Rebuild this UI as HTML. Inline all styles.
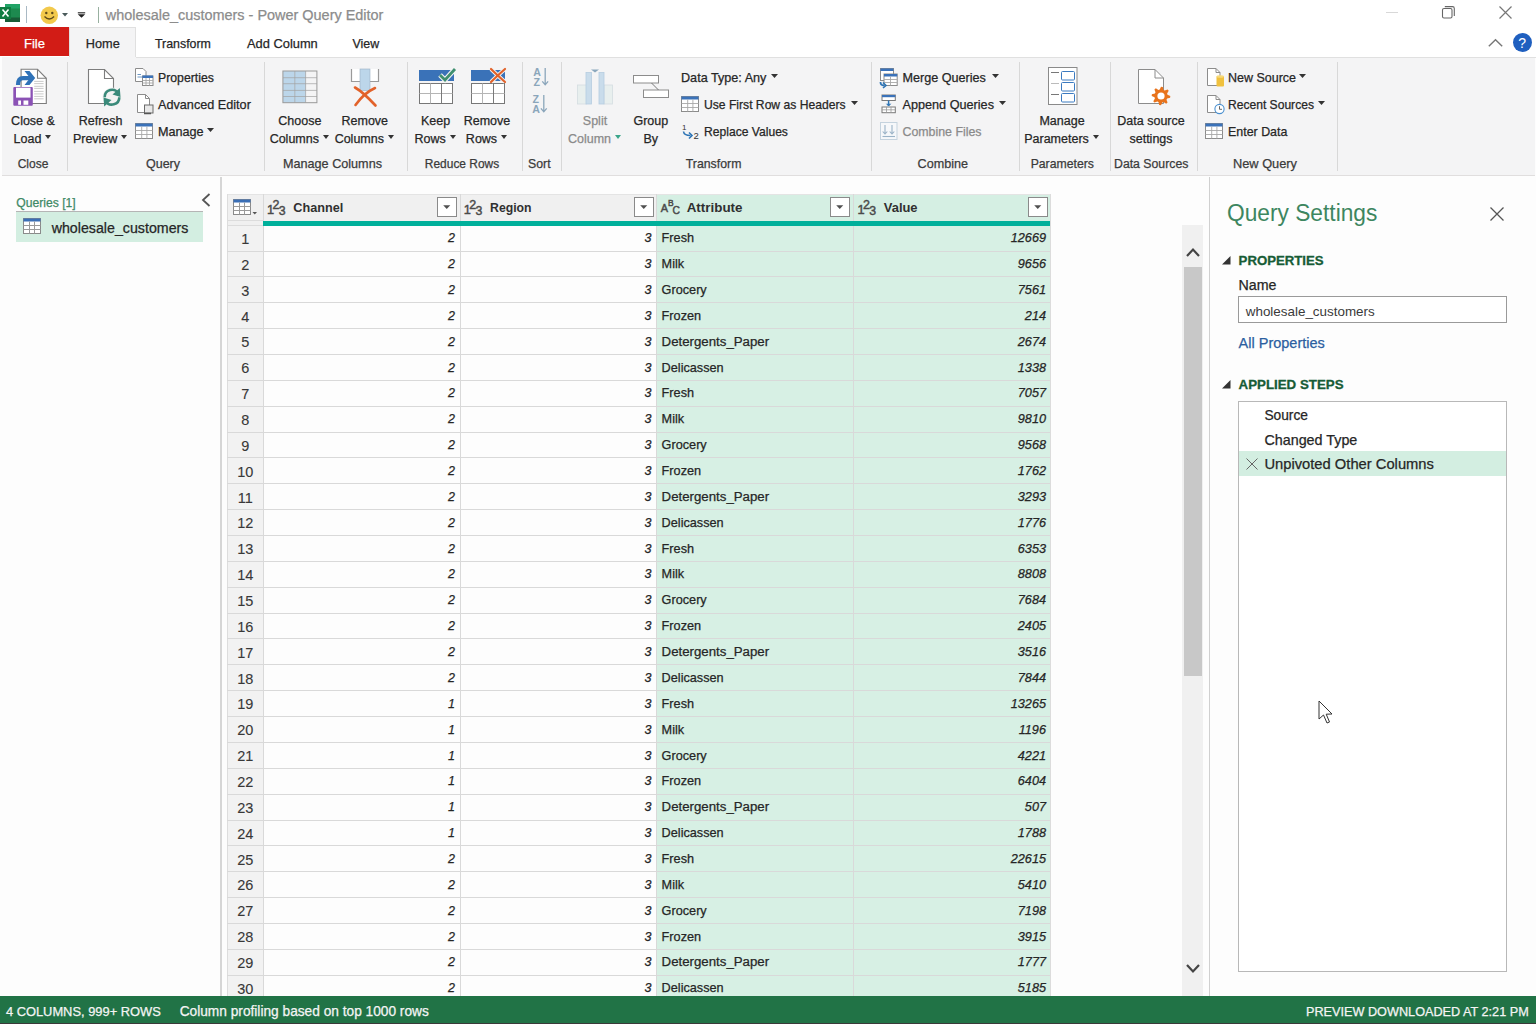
<!DOCTYPE html>
<html><head><meta charset="utf-8"><title>Power Query Editor</title>
<style>
*{box-sizing:border-box;margin:0;padding:0}
html,body{width:1536px;height:1024px;overflow:hidden;background:#fdfdfd;font-family:"Liberation Sans",sans-serif;color:#262626}
.a{position:absolute;white-space:nowrap;-webkit-text-stroke:0.25px currentColor}
svg{position:absolute;overflow:visible}

</style></head><body>
<div class="a" style="left:0px;top:0px;width:1536px;height:27px;background:#ffffff;"></div>
<svg style="left:0px;top:4px" width="21" height="19" viewBox="0 0 21 19"><rect x="5" y="0" width="15" height="18" fill="#1d8a4f"/><rect x="5" y="0" width="15" height="4.5" fill="#21a366"/><rect x="5" y="13.5" width="15" height="4.5" fill="#185c37"/><rect x="0" y="3" width="11" height="12" fill="#107c41"/><path d="M2.5 5.5 L8.5 12.5 M8.5 5.5 L2.5 12.5" stroke="#fff" stroke-width="1.6"/></svg>
<div class="a" style="left:26px;top:6px;width:1px;height:17px;background:#a9b9c4;"></div>
<svg style="left:40px;top:6px" width="19" height="19" viewBox="0 0 19 19"><circle cx="9.3" cy="9.3" r="8.7" fill="#f2c94c"/><circle cx="6.3" cy="7" r="1.2" fill="#5d4a1a"/><circle cx="12.3" cy="7" r="1.2" fill="#5d4a1a"/><path d="M4.5 10.5 Q9.3 15.5 14.1 10.5" stroke="#5d4a1a" stroke-width="1.3" fill="none"/></svg>
<svg style="left:62px;top:12.5px" width="6" height="3.5" viewBox="0 0 6 3.5"><path d="M0 0 H6 L3 3.5 Z" fill="#4a5a5a"/></svg>
<svg style="left:77px;top:11.5px" width="9" height="7" viewBox="0 0 9 7"><rect x="0.8" y="0.2" width="7.4" height="1.2" fill="#333"/><path d="M0.8 2.2 H8.2 L4.5 5.8 Z" fill="#222"/></svg>
<div class="a" style="left:98px;top:7px;width:1px;height:16px;background:#98b0a0;"></div>
<div class="a" style="top:8px;font-size:14.44px;line-height:14.44px;color:#8c8c8c;left:105.7722px;">wholesale_customers - Power Query Editor</div>
<div class="a" style="left:1386px;top:12px;width:12px;height:1px;background:#d8d8d8;"></div>
<svg style="left:1442px;top:6px" width="13" height="13" viewBox="0 0 13 13"><rect x="0.5" y="2.5" width="9.5" height="9.5" rx="1.5" fill="none" stroke="#666" stroke-width="1.1"/><path d="M2.8 0.6 H10.5 Q12.3 0.6 12.3 2.4 V10" fill="none" stroke="#666" stroke-width="1.1"/></svg>
<svg style="left:1499px;top:6px" width="13" height="13" viewBox="0 0 13 13"><path d="M0.5 0.5 L12.5 12.5 M12.5 0.5 L0.5 12.5" stroke="#777" stroke-width="1.2"/></svg>
<div class="a" style="left:0px;top:27px;width:1536px;height:30px;background:#ffffff;"></div>
<div class="a" style="left:0px;top:27px;width:69px;height:29px;background:#d21c16;"></div>
<div class="a" style="top:37px;font-size:13px;line-height:13px;color:#ffffff;left:-115.5px;width:300px;text-align:center;">File</div>
<div class="a" style="left:69px;top:27px;width:67px;height:31px;background:#f4f4f5;border:1px solid #e0e0e0;border-bottom:none"></div>
<div class="a" style="top:38px;font-size:12.73px;line-height:12.73px;color:#262626;left:85.8px;">Home</div>
<div class="a" style="top:38px;font-size:12.39px;line-height:12.39px;color:#262626;left:155.0px;">Transform</div>
<div class="a" style="top:38px;font-size:12.86px;line-height:12.86px;color:#262626;left:247.0px;">Add Column</div>
<div class="a" style="top:38px;font-size:12.42px;line-height:12.42px;color:#262626;left:352.5px;">View</div>
<svg style="left:1488px;top:39px" width="15" height="8" viewBox="0 0 15 8"><path d="M0.8 7.3 L7.5 0.8 L14.2 7.3" fill="none" stroke="#777" stroke-width="1.4"/></svg>
<svg style="left:1513px;top:33px" width="19" height="19" viewBox="0 0 19 19"><circle cx="9.5" cy="9.5" r="9.5" fill="#1f5fbf"/><text x="5.3" y="15" font-family="Liberation Sans" font-size="14" fill="#fff">?</text></svg>
<div class="a" style="left:2px;top:57px;width:1533px;height:119px;background:#f4f4f5;"></div>
<div class="a" style="left:136px;top:57px;width:1400px;height:1px;background:#e0e0e0;"></div>
<div class="a" style="left:2px;top:175px;width:1533px;height:1px;background:#e0dede;"></div>
<div class="a" style="left:67px;top:62px;width:1px;height:109px;background:#d8d8d8;"></div>
<div class="a" style="left:263.5px;top:62px;width:1px;height:109px;background:#d8d8d8;"></div>
<div class="a" style="left:406.5px;top:62px;width:1px;height:109px;background:#d8d8d8;"></div>
<div class="a" style="left:521.5px;top:62px;width:1px;height:109px;background:#d8d8d8;"></div>
<div class="a" style="left:561px;top:62px;width:1px;height:109px;background:#d8d8d8;"></div>
<div class="a" style="left:870.5px;top:62px;width:1px;height:109px;background:#d8d8d8;"></div>
<div class="a" style="left:1018.5px;top:62px;width:1px;height:109px;background:#d8d8d8;"></div>
<div class="a" style="left:1110px;top:62px;width:1px;height:109px;background:#d8d8d8;"></div>
<div class="a" style="left:1197px;top:62px;width:1px;height:109px;background:#d8d8d8;"></div>
<div class="a" style="left:1337px;top:62px;width:1px;height:109px;background:#d8d8d8;"></div>
<div class="a" style="top:158px;font-size:12.02px;line-height:12.02px;color:#3b3b3b;left:-117px;width:300px;text-align:center;">Close</div>
<div class="a" style="top:158px;font-size:12.51px;line-height:12.51px;color:#3b3b3b;left:13px;width:300px;text-align:center;">Query</div>
<div class="a" style="top:158px;font-size:12.63px;line-height:12.63px;color:#3b3b3b;left:182.5px;width:300px;text-align:center;">Manage Columns</div>
<div class="a" style="top:159px;font-size:11.94px;line-height:11.94px;color:#3b3b3b;left:312px;width:300px;text-align:center;">Reduce Rows</div>
<div class="a" style="top:158px;font-size:12.32px;line-height:12.32px;color:#3b3b3b;left:389.29999999999995px;width:300px;text-align:center;">Sort</div>
<div class="a" style="top:158px;font-size:12.32px;line-height:12.32px;color:#3b3b3b;left:563.6px;width:300px;text-align:center;">Transform</div>
<div class="a" style="top:158px;font-size:12.62px;line-height:12.62px;color:#3b3b3b;left:792.8px;width:300px;text-align:center;">Combine</div>
<div class="a" style="top:158px;font-size:12.26px;line-height:12.26px;color:#3b3b3b;left:912.3px;width:300px;text-align:center;">Parameters</div>
<div class="a" style="top:158px;font-size:12.28px;line-height:12.28px;color:#3b3b3b;left:1001.2px;width:300px;text-align:center;">Data Sources</div>
<div class="a" style="top:158px;font-size:12.8px;line-height:12.8px;color:#3b3b3b;left:1115px;width:300px;text-align:center;">New Query</div>
<div class="a" style="top:115px;font-size:12.5px;line-height:12.5px;color:#262626;left:-117px;width:300px;text-align:center;">Close &amp;</div>
<div class="a" style="top:133px;font-size:12.5px;line-height:12.5px;color:#262626;left:-117px;width:300px;text-align:center;">Load<span style="display:inline-block;width:11px;height:5px;position:relative;"><span style="position:absolute;left:4px;top:-3px;border-left:3.5px solid transparent;border-right:3.5px solid transparent;border-top:4px solid #333"></span></span></div>
<div class="a" style="top:115px;font-size:12.5px;line-height:12.5px;color:#262626;left:-49.400000000000006px;width:300px;text-align:center;">Refresh</div>
<div class="a" style="top:133px;font-size:12.5px;line-height:12.5px;color:#262626;left:-49.400000000000006px;width:300px;text-align:center;">Preview<span style="display:inline-block;width:11px;height:5px;position:relative;"><span style="position:absolute;left:4px;top:-3px;border-left:3.5px solid transparent;border-right:3.5px solid transparent;border-top:4px solid #333"></span></span></div>
<div class="a" style="top:115px;font-size:12.5px;line-height:12.5px;color:#262626;left:149.8px;width:300px;text-align:center;">Choose</div>
<div class="a" style="top:133px;font-size:12.5px;line-height:12.5px;color:#262626;left:149.8px;width:300px;text-align:center;">Columns<span style="display:inline-block;width:11px;height:5px;position:relative;"><span style="position:absolute;left:4px;top:-3px;border-left:3.5px solid transparent;border-right:3.5px solid transparent;border-top:4px solid #333"></span></span></div>
<div class="a" style="top:115px;font-size:12.5px;line-height:12.5px;color:#262626;left:214.8px;width:300px;text-align:center;">Remove</div>
<div class="a" style="top:133px;font-size:12.5px;line-height:12.5px;color:#262626;left:214.8px;width:300px;text-align:center;">Columns<span style="display:inline-block;width:11px;height:5px;position:relative;"><span style="position:absolute;left:4px;top:-3px;border-left:3.5px solid transparent;border-right:3.5px solid transparent;border-top:4px solid #333"></span></span></div>
<div class="a" style="top:115px;font-size:12.5px;line-height:12.5px;color:#262626;left:285.6px;width:300px;text-align:center;">Keep</div>
<div class="a" style="top:133px;font-size:12.5px;line-height:12.5px;color:#262626;left:285.6px;width:300px;text-align:center;">Rows<span style="display:inline-block;width:11px;height:5px;position:relative;"><span style="position:absolute;left:4px;top:-3px;border-left:3.5px solid transparent;border-right:3.5px solid transparent;border-top:4px solid #333"></span></span></div>
<div class="a" style="top:115px;font-size:12.5px;line-height:12.5px;color:#262626;left:337px;width:300px;text-align:center;">Remove</div>
<div class="a" style="top:133px;font-size:12.5px;line-height:12.5px;color:#262626;left:337px;width:300px;text-align:center;">Rows<span style="display:inline-block;width:11px;height:5px;position:relative;"><span style="position:absolute;left:4px;top:-3px;border-left:3.5px solid transparent;border-right:3.5px solid transparent;border-top:4px solid #333"></span></span></div>
<div class="a" style="top:115px;font-size:12.5px;line-height:12.5px;color:#8a8a8a;left:445px;width:300px;text-align:center;">Split</div>
<div class="a" style="top:133px;font-size:12.5px;line-height:12.5px;color:#8a8a8a;left:445px;width:300px;text-align:center;">Column<span style="display:inline-block;width:11px;height:5px;position:relative;"><span style="position:absolute;left:4px;top:-3px;border-left:3.5px solid transparent;border-right:3.5px solid transparent;border-top:4px solid #3aa58a"></span></span></div>
<div class="a" style="top:115px;font-size:12.5px;line-height:12.5px;color:#262626;left:500.79999999999995px;width:300px;text-align:center;">Group</div>
<div class="a" style="top:133px;font-size:12.5px;line-height:12.5px;color:#262626;left:500.79999999999995px;width:300px;text-align:center;">By</div>
<div class="a" style="top:115px;font-size:12.5px;line-height:12.5px;color:#262626;left:912px;width:300px;text-align:center;">Manage</div>
<div class="a" style="top:133px;font-size:12.5px;line-height:12.5px;color:#262626;left:912px;width:300px;text-align:center;">Parameters<span style="display:inline-block;width:11px;height:5px;position:relative;"><span style="position:absolute;left:4px;top:-3px;border-left:3.5px solid transparent;border-right:3.5px solid transparent;border-top:4px solid #333"></span></span></div>
<div class="a" style="top:115px;font-size:12.5px;line-height:12.5px;color:#262626;left:1001px;width:300px;text-align:center;">Data source</div>
<div class="a" style="top:133px;font-size:12.5px;line-height:12.5px;color:#262626;left:1001px;width:300px;text-align:center;">settings</div>
<div class="a" style="top:72px;font-size:12.28px;line-height:12.28px;color:#262626;left:158.0px;">Properties</div>
<div class="a" style="top:99px;font-size:12.67px;line-height:12.67px;color:#262626;left:158.0px;">Advanced Editor</div>
<div class="a" style="top:126px;font-size:12.64px;line-height:12.64px;color:#262626;left:158.0px;">Manage</div>
<svg style="left:207px;top:128px" width="7" height="4" viewBox="0 0 7 4"><path d="M0 0 H7 L3.5 4 Z" fill="#333"/></svg>
<div class="a" style="top:72px;font-size:12.64px;line-height:12.64px;color:#262626;left:681.0px;">Data Type: Any</div>
<svg style="left:771px;top:74px" width="7" height="4" viewBox="0 0 7 4"><path d="M0 0 H7 L3.5 4 Z" fill="#333"/></svg>
<div class="a" style="top:99px;font-size:12.13px;line-height:12.13px;color:#262626;left:704.0px;">Use First Row as Headers</div>
<svg style="left:851px;top:101px" width="7" height="4" viewBox="0 0 7 4"><path d="M0 0 H7 L3.5 4 Z" fill="#333"/></svg>
<div class="a" style="top:126px;font-size:12.12px;line-height:12.12px;color:#262626;left:704.0px;">Replace Values</div>
<div class="a" style="top:72px;font-size:12.62px;line-height:12.62px;color:#262626;left:902.5px;">Merge Queries</div>
<svg style="left:992px;top:74px" width="7" height="4" viewBox="0 0 7 4"><path d="M0 0 H7 L3.5 4 Z" fill="#333"/></svg>
<div class="a" style="top:99px;font-size:12.66px;line-height:12.66px;color:#262626;left:902.5px;">Append Queries</div>
<svg style="left:999px;top:101px" width="7" height="4" viewBox="0 0 7 4"><path d="M0 0 H7 L3.5 4 Z" fill="#333"/></svg>
<div class="a" style="top:126px;font-size:12.36px;line-height:12.36px;color:#8a8a8a;left:902.5px;">Combine Files</div>
<div class="a" style="top:72px;font-size:12.49px;line-height:12.49px;color:#262626;left:1228.0px;">New Source</div>
<svg style="left:1299px;top:74px" width="7" height="4" viewBox="0 0 7 4"><path d="M0 0 H7 L3.5 4 Z" fill="#333"/></svg>
<div class="a" style="top:99px;font-size:12.09px;line-height:12.09px;color:#262626;left:1228.0px;">Recent Sources</div>
<svg style="left:1318px;top:101px" width="7" height="4" viewBox="0 0 7 4"><path d="M0 0 H7 L3.5 4 Z" fill="#333"/></svg>
<div class="a" style="top:126px;font-size:12.43px;line-height:12.43px;color:#262626;left:1228.0px;">Enter Data</div>
<svg style="left:13px;top:68px" width="35" height="39" viewBox="0 0 35 39"><path d="M8.1 1.3 H24.5 L33.3 10.3 V35.5 H8.1 Z" fill="#fff" stroke="#7d7d7d" stroke-width="1.1"/><path d="M24.5 1.3 V10.3 H33.3" fill="none" stroke="#7d7d7d" stroke-width="1.1"/><path d="M21.2 13.4 H30.6 M21.2 15.6 H30.6 M21.2 18.3 H30.6 M21.2 20.4 H30.6 M21.2 23.4 H30.6 M21.2 25.9 H30.6 M21.2 28.4 H30.6 M21.2 30.8 H30.6" stroke="#bdbdbd" stroke-width="0.8"/><path d="M18 10.1 H10 Q5 10.1 5 17" fill="none" stroke="#2f72b8" stroke-width="4.2"/><path d="M11.5 3 H16.5 L22.2 10.1 L16.5 17 H11.5 L17 10.1 Z" fill="#2f72b8"/><rect x="0.3" y="18.9" width="19.5" height="18.9" rx="1" fill="#8b52b5"/><rect x="3" y="19.7" width="14.5" height="9.9" fill="#fff"/><rect x="5.2" y="32.5" width="2.8" height="4.3" fill="#fff"/><rect x="10.5" y="32.5" width="4.8" height="4.3" fill="#fff"/></svg>
<svg style="left:87px;top:68px" width="35" height="39" viewBox="0 0 35 39"><path d="M1.5 1.5 H17.5 L26.5 10.5 V35.5 H1.5 Z" fill="#fff" stroke="#7d7d7d" stroke-width="1.1"/><path d="M17.5 1.5 V10.5 H26.5" fill="none" stroke="#7d7d7d" stroke-width="1.1"/></svg>
<svg style="left:98px;top:84px" width="28" height="26" viewBox="0 0 28 26"><circle cx="14" cy="13.2" r="9.6" fill="#f3f3f3"/><path d="M6.7 13.2 A7.3 7.3 0 0 1 20.4 9.6" fill="none" stroke="#3a8a7a" stroke-width="2.6"/><polygon points="21.8,4 22.5,13 14.5,10.5" fill="#3a8a7a"/><path d="M21.3 13.2 A7.3 7.3 0 0 1 7.6 16.8" fill="none" stroke="#3a8a7a" stroke-width="2.6"/><polygon points="6.2,22.4 5.5,13.4 13.5,15.9" fill="#3a8a7a"/></svg>
<svg style="left:135px;top:68px" width="19" height="19" viewBox="0 0 19 19"><path d="M0.5 0.5 H8 L11 3.5 V13.5 H0.5 Z" fill="#fff" stroke="#8c8c8c"/><path d="M2.5 6.5 H6 M2.5 9 H7" stroke="#6d97c4" stroke-width="1"/><rect x="7.5" y="8" width="10.5" height="9.5" fill="#fff" stroke="#8c8c8c"/><rect x="7.5" y="7.5" width="10.5" height="2.5" fill="#3b72b9"/><path d="M7.5 12.5 H18 M7.5 15 H18 M11 10 V17.5 M14.5 10 V17.5" stroke="#a8a8a8" stroke-width="0.9"/></svg>
<svg style="left:137px;top:94px" width="18" height="21" viewBox="0 0 18 21"><path d="M0.5 0.5 H8.5 L12.5 4.5 V18.5 H0.5 Z" fill="#fff" stroke="#8c8c8c"/><path d="M8.5 0.5 V4.5 H12.5" fill="none" stroke="#8c8c8c"/><rect x="7.5" y="11" width="8.5" height="8" fill="#e8e8e8" stroke="#6a6a6a"/><path d="M7 19.5 H14" stroke="#555" stroke-width="1.5"/></svg>
<svg style="left:135px;top:123px" width="18" height="16" viewBox="0 0 18 16"><rect x="0.5" y="0.5" width="17" height="15" fill="#fff" stroke="#8c8c8c"/><rect x="0.5" y="0.5" width="17" height="3" fill="#3b72b9"/><path d="M0.5 7.5 H17.5 M0.5 11.5 H17.5 M6.7 3.5 V15.5 M11.9 3.5 V15.5" stroke="#a8a8a8" stroke-width="0.9"/></svg>
<svg style="left:282px;top:70px" width="36" height="34" viewBox="0 0 36 34"><rect x="1" y="1" width="11.8" height="31.7" fill="#bcd6ea"/><rect x="12.8" y="1" width="10.9" height="31.7" fill="#bcd6ea"/><rect x="0.9" y="1" width="34" height="31.7" fill="none" stroke="#999" stroke-width="1"/><path d="M12.8 1 V32.7 M23.6 1 V32.7 M1 7.7 H35 M1 13.7 H35 M1 20.4 H35 M1 26.5 H35" stroke="#a0a0a0" stroke-width="0.7"/></svg>
<svg style="left:350px;top:68px" width="30" height="40" viewBox="0 0 30 40"><path d="M1.5 1 V13.5 H28.5 V1" fill="#fff" stroke="#9a9a9a" stroke-width="1.2"/><rect x="10" y="1" width="10" height="21.5" fill="#bcd6ea" stroke="#9ab0c4" stroke-width="0.6"/><path d="M5 19.5 Q13 24 25.5 37.5" fill="none" stroke="#e2622a" stroke-width="2.6" stroke-linecap="round"/><path d="M25 20 Q14 25 5.5 37" fill="none" stroke="#e2622a" stroke-width="2.6" stroke-linecap="round"/></svg>
<div class="a" style="left:419px;top:70px;width:34.5px;height:11px;background:#3a72b8;"></div>
<svg style="left:419px;top:83px" width="35" height="21" viewBox="0 0 35 21"><rect x="0.5" y="0.5" width="33" height="20" fill="#fff" stroke="#777"/><path d="M0.5 10.5 H33.5 M11.5 0.5 V20.5" stroke="#b5b5b5"/><path d="M22.5 0.5 V20.5" stroke="#7a7a7a"/></svg>
<svg style="left:438px;top:67px" width="19" height="15" viewBox="0 0 19 15"><path d="M2 8 L7 13 L17 2" fill="none" stroke="#f4f4f5" stroke-width="5"/><path d="M2 8 L7 13 L17 2" fill="none" stroke="#3f8f6f" stroke-width="2.8"/></svg>
<div class="a" style="left:470.5px;top:70px;width:34.5px;height:11px;background:#3a72b8;"></div>
<svg style="left:470.5px;top:83px" width="35" height="21" viewBox="0 0 35 21"><rect x="0.5" y="0.5" width="33" height="20" fill="#fff" stroke="#777"/><path d="M0.5 10.5 H33.5 M11.5 0.5 V20.5" stroke="#b5b5b5"/><path d="M22.5 0.5 V20.5" stroke="#7a7a7a"/></svg>
<svg style="left:489px;top:67px" width="18" height="17" viewBox="0 0 18 17"><path d="M2 2 Q8 8 16 15 M16 2 Q9 8 2 15" fill="none" stroke="#f3f3f3" stroke-width="4"/><path d="M2 2 Q8 8 16 15 M16 2 Q9 8 2 15" fill="none" stroke="#e2622a" stroke-width="2.2" stroke-linecap="round"/></svg>
<svg style="left:532px;top:67px" width="18" height="20" viewBox="0 0 18 20"><text x="1.2" y="8.7" font-family="Liberation Sans" font-size="10.6" font-weight="bold" fill="#8ba6bb">A</text><text x="1.6" y="18.5" font-family="Liberation Sans" font-size="10.6" font-weight="bold" fill="#8ba6bb">Z</text><path d="M13.2 1 V17.5 M10.3 14.3 L13.2 17.8 L16.1 14.3" fill="none" stroke="#8ba6bb" stroke-width="1.3"/></svg>
<svg style="left:531px;top:94px" width="18" height="20" viewBox="0 0 18 20"><text x="1.6" y="9" font-family="Liberation Sans" font-size="10.6" font-weight="bold" fill="#8ba6bb">Z</text><text x="1.2" y="18.5" font-family="Liberation Sans" font-size="10.6" font-weight="bold" fill="#8ba6bb">A</text><path d="M12.8 1 V17.5 M9.9 14.3 L12.8 17.8 L15.7 14.3" fill="none" stroke="#8ba6bb" stroke-width="1.3"/></svg>
<svg style="left:577px;top:68px" width="37" height="37" viewBox="0 0 37 37"><rect x="0.5" y="17" width="9" height="19" fill="#e8efee" stroke="#d4dde0" stroke-width="0.8"/><rect x="27" y="17" width="8.5" height="19" fill="#e8efee" stroke="#d4dde0" stroke-width="0.8"/><rect x="9" y="4.5" width="5.5" height="31.5" fill="#c9dceb" stroke="#b6cde0" stroke-width="0.8"/><rect x="22" y="4.5" width="5" height="31.5" fill="#c9dceb" stroke="#b6cde0" stroke-width="0.8"/><path d="M14 1.5 H22 L18 4.5 Z" fill="#8aa7bd"/></svg>
<svg style="left:633px;top:75px" width="37" height="24" viewBox="0 0 37 24"><rect x="0.5" y="0.5" width="25" height="7.5" fill="#fff" stroke="#8c8c8c"/><rect x="10.5" y="15" width="25" height="7.5" fill="#fff" stroke="#8c8c8c"/><path d="M18.5 8 L25.5 15" stroke="#6a6a6a" stroke-width="0.9"/></svg>
<svg style="left:681px;top:96px" width="18" height="16" viewBox="0 0 18 16"><rect x="0.5" y="0.5" width="17" height="15" fill="#fff" stroke="#8c8c8c"/><rect x="0.5" y="0.5" width="17" height="3" fill="#3b72b9"/><path d="M0.5 7.5 H17.5 M0.5 11.5 H17.5 M6.7 3.5 V15.5 M11.9 3.5 V15.5" stroke="#a8a8a8" stroke-width="0.9"/></svg>
<svg style="left:681px;top:123px" width="19" height="17" viewBox="0 0 19 17"><text x="1" y="6.5" font-family="Liberation Sans" font-size="8" fill="#333">1</text><path d="M2.5 8.5 Q3 12.5 9.5 12.5" fill="none" stroke="#2e75b6" stroke-width="1.6"/><path d="M8 9.5 L11 12.5 L8 15.5" fill="none" stroke="#2e75b6" stroke-width="1.6"/><text x="12.5" y="16" font-family="Liberation Sans" font-size="9.5" fill="#333">2</text></svg>
<svg style="left:879px;top:67px" width="19" height="21" viewBox="0 0 19 21"><rect x="1.5" y="1.5" width="13" height="12" fill="#fff" stroke="#8c8c8c"/><rect x="1.5" y="1.5" width="13" height="2.5" fill="#3b72b9"/><rect x="5" y="7" width="13.2" height="11.5" fill="#fff" stroke="#8c8c8c"/><rect x="5" y="7" width="13.2" height="2.5" fill="#3b72b9"/><path d="M5 12.5 H18 M5 15.5 H18 M11.5 9.5 V18.5" stroke="#a8a8a8" stroke-width="0.9"/><path d="M1.5 15 Q1.5 18.5 5 18.5" fill="none" stroke="#2e75b6" stroke-width="1.8"/><path d="M4 15.5 L7 18.5 L4 21" fill="none" stroke="#2e75b6" stroke-width="1.6"/></svg>
<svg style="left:881px;top:94px" width="16" height="20" viewBox="0 0 16 20"><rect x="1" y="1" width="13.3" height="5.5" fill="#fff" stroke="#7a7a7a"/><rect x="1" y="1" width="13.3" height="2.2" fill="#3b72b9"/><path d="M7.6 6.5 V11.5" stroke="#2e75b6" stroke-width="1.5"/><path d="M5.5 9.8 L7.6 12 L9.7 9.8" fill="#2e75b6" stroke="#2e75b6"/><rect x="1" y="13" width="13.3" height="5.7" fill="#fff" stroke="#7a7a7a"/><path d="M1 15.8 H14.3 M5.5 13 V18.7 M10 13 V18.7" stroke="#9a9a9a" stroke-width="0.8"/></svg>
<svg style="left:880px;top:122px" width="18" height="19" viewBox="0 0 18 19"><rect x="0.5" y="0.5" width="16.5" height="17" fill="#f6f8fa" stroke="#c5d3de"/><path d="M5 3 V12 M2.7 9.5 L5 12 L7.3 9.5 M12 3 V12 M9.7 9.5 L12 12 L14.3 9.5" fill="none" stroke="#9bb3c7" stroke-width="1.1"/><path d="M2.5 14.5 H15" stroke="#9bb3c7" stroke-width="1.1"/></svg>
<svg style="left:1048px;top:67px" width="30" height="39" viewBox="0 0 30 39"><rect x="0.5" y="0.5" width="28.5" height="37" fill="#fff" stroke="#8a8a8a" stroke-width="1"/><rect x="13.5" y="4.5" width="13" height="8.5" rx="1" fill="#fff" stroke="#3b7ac0" stroke-width="1"/><rect x="13.5" y="15.5" width="13" height="8.5" rx="1" fill="#fff" stroke="#3b7ac0" stroke-width="1"/><rect x="13.5" y="26.5" width="13" height="8.5" rx="1" fill="#fff" stroke="#3b7ac0" stroke-width="1"/><path d="M3 5.5 H11 M3 27.5 H11" stroke="#777" stroke-width="1"/><path d="M3 16.5 H11" stroke="#bbb" stroke-width="1"/></svg>
<svg style="left:1137px;top:68px" width="36" height="40" viewBox="0 0 36 40"><path d="M1.5 1.5 H18 L26.5 10 V35.5 H1.5 Z" fill="#fff" stroke="#8c8c8c"/><path d="M18 1.5 V10 H26.5" fill="none" stroke="#8c8c8c"/><polygon points="24.00,18.70 25.81,18.88 26.53,21.90 27.67,22.51 30.58,21.42 31.73,22.83 30.10,25.47 30.47,26.71 33.30,28.00 33.12,29.81 30.10,30.53 29.49,31.67 30.58,34.58 29.17,35.73 26.53,34.10 25.29,34.47 24.00,37.30 22.19,37.12 21.47,34.10 20.33,33.49 17.42,34.58 16.27,33.17 17.90,30.53 17.53,29.29 14.70,28.00 14.88,26.19 17.90,25.47 18.51,24.33 17.42,21.42 18.83,20.27 21.47,21.90 22.71,21.53" fill="#e8731c"/><circle cx="24" cy="28" r="3.6" fill="#fff"/></svg>
<svg style="left:1206px;top:67px" width="19" height="21" viewBox="0 0 19 21"><path d="M1.5 1.5 H10 L14 5.5 V18.5 H1.5 Z" fill="#fff" stroke="#8c8c8c"/><path d="M10 1.5 V5.5 H14" fill="none" stroke="#8c8c8c"/><rect x="10.5" y="9" width="7.5" height="10.5" rx="1" fill="#f0c13e"/><ellipse cx="14.25" cy="9.5" rx="3.75" ry="1.3" fill="#f7d978"/></svg>
<svg style="left:1206px;top:94px" width="20" height="20" viewBox="0 0 20 20"><path d="M1.5 1.5 H10 L14 5.5 V18.5 H1.5 Z" fill="#fff" stroke="#8c8c8c"/><path d="M10 1.5 V5.5 H14" fill="none" stroke="#8c8c8c"/><circle cx="13.5" cy="15" r="4.6" fill="#fff" stroke="#4a90d0" stroke-width="1.1"/><path d="M13.5 12.2 V15.3 H16" fill="none" stroke="#555" stroke-width="0.9"/></svg>
<svg style="left:1205px;top:123px" width="18" height="16" viewBox="0 0 18 16"><rect x="0.5" y="0.5" width="17" height="15" fill="#fff" stroke="#8c8c8c"/><rect x="0.5" y="0.5" width="17" height="3" fill="#3b72b9"/><path d="M0.5 7.5 H17.5 M0.5 11.5 H17.5 M6.7 3.5 V15.5 M11.9 3.5 V15.5" stroke="#a8a8a8" stroke-width="0.9"/></svg>
<div class="a" style="left:0px;top:176px;width:1536px;height:820px;background:#fdfdfd;"></div>
<div class="a" style="left:220px;top:177px;width:2px;height:819px;background:#d6d6d6;"></div>
<div class="a" style="top:197px;font-size:12.15px;line-height:12.15px;color:#3f8a66;left:16.25px;">Queries [1]</div>
<div class="a" style="left:16px;top:211px;width:187px;height:1px;background:#b5b5b5;"></div>
<div class="a" style="left:16px;top:212px;width:187px;height:30px;background:#d3eee1;"></div>
<svg style="left:23px;top:218px" width="18" height="16" viewBox="0 0 18 16"><rect x="0.5" y="0.5" width="17" height="15" fill="#fff" stroke="#8a8a8a"/><rect x="0.5" y="0.5" width="17" height="3" fill="#3b6fb6"/><path d="M0.5 7.5 H17.5 M0.5 11.5 H17.5 M6.5 3.5 V15.5 M11.5 3.5 V15.5" stroke="#9a9a9a" stroke-width="1"/></svg>
<div class="a" style="top:221px;font-size:14.22px;line-height:14.22px;color:#262626;left:51.6711px;">wholesale_customers</div>
<svg style="left:201px;top:193px" width="10" height="14" viewBox="0 0 10 14"><path d="M8.5 1 L2 7 L8.5 13" fill="none" stroke="#555" stroke-width="1.8"/></svg>
<div class="a" style="left:227px;top:194px;width:36px;height:27px;background:#f0f0f0;"></div>
<div class="a" style="left:263px;top:194px;width:197px;height:27px;background:#f0f0f0;"></div>
<div class="a" style="left:460px;top:194px;width:196px;height:27px;background:#f0f0f0;"></div>
<div class="a" style="left:656px;top:194px;width:197px;height:27px;background:#d5efe3;"></div>
<div class="a" style="left:853px;top:194px;width:197px;height:27px;background:#d5efe3;"></div>
<div class="a" style="left:227px;top:220px;width:36px;height:6px;background:#f0f0f0;"></div>
<div class="a" style="left:227px;top:220px;width:36px;height:1px;background:#dcdcdc;"></div>
<div class="a" style="left:227px;top:225px;width:36px;height:1px;background:#dcdcdc;"></div>
<div class="a" style="left:263px;top:221px;width:787px;height:5px;background:#00b09b;"></div>
<div class="a" style="left:227px;top:226px;width:36px;height:770px;background:#f2f2f2;"></div>
<div class="a" style="left:263px;top:226px;width:393px;height:770px;background:#fdfdfd;"></div>
<div class="a" style="left:656px;top:226px;width:394px;height:770px;background:#d7f0e4;"></div>
<div class="a" style="left:227px;top:194px;width:823px;height:1px;background:#e4e4e4;"></div>
<div class="a" style="left:227px;top:194px;width:1px;height:802px;background:#dddddd;"></div>
<div class="a" style="left:263px;top:194px;width:1px;height:27px;background:#d9d9d9;"></div>
<div class="a" style="left:263px;top:226px;width:1px;height:770px;background:#d9d9d9;"></div>
<div class="a" style="left:460px;top:194px;width:1px;height:27px;background:#d9d9d9;"></div>
<div class="a" style="left:460px;top:226px;width:1px;height:770px;background:#d9d9d9;"></div>
<div class="a" style="left:656px;top:194px;width:1px;height:27px;background:#d9d9d9;"></div>
<div class="a" style="left:656px;top:226px;width:1px;height:770px;background:#d9d9d9;"></div>
<div class="a" style="left:853px;top:194px;width:1px;height:27px;background:#d9d9d9;"></div>
<div class="a" style="left:853px;top:226px;width:1px;height:770px;background:#d9d9d9;"></div>
<div class="a" style="left:1050px;top:194px;width:1px;height:802px;background:#dcdcdc;"></div>
<div class="a" style="left:227px;top:251px;width:823px;height:1px;background:#d9d9d9;"></div>
<div class="a" style="top:232px;font-size:14.5px;line-height:14.5px;color:#383838;-webkit-text-stroke:0.1px currentColor;left:95.30000000000001px;width:300px;text-align:center;">1</div>
<div class="a" style="top:232px;font-size:12.5px;line-height:12.5px;color:#262626;font-style:italic;left:55px;width:400px;text-align:right;">2</div>
<div class="a" style="top:232px;font-size:12.5px;line-height:12.5px;color:#262626;font-style:italic;left:251.39999999999998px;width:400px;text-align:right;">3</div>
<div class="a" style="top:232px;font-size:12.7px;line-height:12.7px;color:#262626;left:661.6px;">Fresh</div>
<div class="a" style="top:232px;font-size:12.7px;line-height:12.7px;color:#262626;font-style:italic;left:646px;width:400px;text-align:right;">12669</div>
<div class="a" style="left:227px;top:276px;width:823px;height:1px;background:#d9d9d9;"></div>
<div class="a" style="top:258px;font-size:14.5px;line-height:14.5px;color:#383838;-webkit-text-stroke:0.1px currentColor;left:95.30000000000001px;width:300px;text-align:center;">2</div>
<div class="a" style="top:258px;font-size:12.5px;line-height:12.5px;color:#262626;font-style:italic;left:55px;width:400px;text-align:right;">2</div>
<div class="a" style="top:258px;font-size:12.5px;line-height:12.5px;color:#262626;font-style:italic;left:251.39999999999998px;width:400px;text-align:right;">3</div>
<div class="a" style="top:258px;font-size:12.7px;line-height:12.7px;color:#262626;left:661.6px;">Milk</div>
<div class="a" style="top:258px;font-size:12.7px;line-height:12.7px;color:#262626;font-style:italic;left:646px;width:400px;text-align:right;">9656</div>
<div class="a" style="left:227px;top:302px;width:823px;height:1px;background:#d9d9d9;"></div>
<div class="a" style="top:284px;font-size:14.5px;line-height:14.5px;color:#383838;-webkit-text-stroke:0.1px currentColor;left:95.30000000000001px;width:300px;text-align:center;">3</div>
<div class="a" style="top:284px;font-size:12.5px;line-height:12.5px;color:#262626;font-style:italic;left:55px;width:400px;text-align:right;">2</div>
<div class="a" style="top:284px;font-size:12.5px;line-height:12.5px;color:#262626;font-style:italic;left:251.39999999999998px;width:400px;text-align:right;">3</div>
<div class="a" style="top:284px;font-size:12.7px;line-height:12.7px;color:#262626;left:661.6px;">Grocery</div>
<div class="a" style="top:284px;font-size:12.7px;line-height:12.7px;color:#262626;font-style:italic;left:646px;width:400px;text-align:right;">7561</div>
<div class="a" style="left:227px;top:328px;width:823px;height:1px;background:#d9d9d9;"></div>
<div class="a" style="top:310px;font-size:14.5px;line-height:14.5px;color:#383838;-webkit-text-stroke:0.1px currentColor;left:95.30000000000001px;width:300px;text-align:center;">4</div>
<div class="a" style="top:310px;font-size:12.5px;line-height:12.5px;color:#262626;font-style:italic;left:55px;width:400px;text-align:right;">2</div>
<div class="a" style="top:310px;font-size:12.5px;line-height:12.5px;color:#262626;font-style:italic;left:251.39999999999998px;width:400px;text-align:right;">3</div>
<div class="a" style="top:310px;font-size:12.7px;line-height:12.7px;color:#262626;left:661.6px;">Frozen</div>
<div class="a" style="top:310px;font-size:12.7px;line-height:12.7px;color:#262626;font-style:italic;left:646px;width:400px;text-align:right;">214</div>
<div class="a" style="left:227px;top:354px;width:823px;height:1px;background:#d9d9d9;"></div>
<div class="a" style="top:335px;font-size:14.5px;line-height:14.5px;color:#383838;-webkit-text-stroke:0.1px currentColor;left:95.30000000000001px;width:300px;text-align:center;">5</div>
<div class="a" style="top:336px;font-size:12.5px;line-height:12.5px;color:#262626;font-style:italic;left:55px;width:400px;text-align:right;">2</div>
<div class="a" style="top:336px;font-size:12.5px;line-height:12.5px;color:#262626;font-style:italic;left:251.39999999999998px;width:400px;text-align:right;">3</div>
<div class="a" style="top:335px;font-size:13.25px;line-height:13.25px;color:#262626;left:661.6px;">Detergents_Paper</div>
<div class="a" style="top:336px;font-size:12.7px;line-height:12.7px;color:#262626;font-style:italic;left:646px;width:400px;text-align:right;">2674</div>
<div class="a" style="left:227px;top:380px;width:823px;height:1px;background:#d9d9d9;"></div>
<div class="a" style="top:361px;font-size:14.5px;line-height:14.5px;color:#383838;-webkit-text-stroke:0.1px currentColor;left:95.30000000000001px;width:300px;text-align:center;">6</div>
<div class="a" style="top:362px;font-size:12.5px;line-height:12.5px;color:#262626;font-style:italic;left:55px;width:400px;text-align:right;">2</div>
<div class="a" style="top:362px;font-size:12.5px;line-height:12.5px;color:#262626;font-style:italic;left:251.39999999999998px;width:400px;text-align:right;">3</div>
<div class="a" style="top:362px;font-size:12.7px;line-height:12.7px;color:#262626;left:661.6px;">Delicassen</div>
<div class="a" style="top:362px;font-size:12.7px;line-height:12.7px;color:#262626;font-style:italic;left:646px;width:400px;text-align:right;">1338</div>
<div class="a" style="left:227px;top:406px;width:823px;height:1px;background:#d9d9d9;"></div>
<div class="a" style="top:387px;font-size:14.5px;line-height:14.5px;color:#383838;-webkit-text-stroke:0.1px currentColor;left:95.30000000000001px;width:300px;text-align:center;">7</div>
<div class="a" style="top:387px;font-size:12.5px;line-height:12.5px;color:#262626;font-style:italic;left:55px;width:400px;text-align:right;">2</div>
<div class="a" style="top:387px;font-size:12.5px;line-height:12.5px;color:#262626;font-style:italic;left:251.39999999999998px;width:400px;text-align:right;">3</div>
<div class="a" style="top:387px;font-size:12.7px;line-height:12.7px;color:#262626;left:661.6px;">Fresh</div>
<div class="a" style="top:387px;font-size:12.7px;line-height:12.7px;color:#262626;font-style:italic;left:646px;width:400px;text-align:right;">7057</div>
<div class="a" style="left:227px;top:432px;width:823px;height:1px;background:#d9d9d9;"></div>
<div class="a" style="top:413px;font-size:14.5px;line-height:14.5px;color:#383838;-webkit-text-stroke:0.1px currentColor;left:95.30000000000001px;width:300px;text-align:center;">8</div>
<div class="a" style="top:413px;font-size:12.5px;line-height:12.5px;color:#262626;font-style:italic;left:55px;width:400px;text-align:right;">2</div>
<div class="a" style="top:413px;font-size:12.5px;line-height:12.5px;color:#262626;font-style:italic;left:251.39999999999998px;width:400px;text-align:right;">3</div>
<div class="a" style="top:413px;font-size:12.7px;line-height:12.7px;color:#262626;left:661.6px;">Milk</div>
<div class="a" style="top:413px;font-size:12.7px;line-height:12.7px;color:#262626;font-style:italic;left:646px;width:400px;text-align:right;">9810</div>
<div class="a" style="left:227px;top:457px;width:823px;height:1px;background:#d9d9d9;"></div>
<div class="a" style="top:439px;font-size:14.5px;line-height:14.5px;color:#383838;-webkit-text-stroke:0.1px currentColor;left:95.30000000000001px;width:300px;text-align:center;">9</div>
<div class="a" style="top:439px;font-size:12.5px;line-height:12.5px;color:#262626;font-style:italic;left:55px;width:400px;text-align:right;">2</div>
<div class="a" style="top:439px;font-size:12.5px;line-height:12.5px;color:#262626;font-style:italic;left:251.39999999999998px;width:400px;text-align:right;">3</div>
<div class="a" style="top:439px;font-size:12.7px;line-height:12.7px;color:#262626;left:661.6px;">Grocery</div>
<div class="a" style="top:439px;font-size:12.7px;line-height:12.7px;color:#262626;font-style:italic;left:646px;width:400px;text-align:right;">9568</div>
<div class="a" style="left:227px;top:483px;width:823px;height:1px;background:#d9d9d9;"></div>
<div class="a" style="top:465px;font-size:14.5px;line-height:14.5px;color:#383838;-webkit-text-stroke:0.1px currentColor;left:95.30000000000001px;width:300px;text-align:center;">10</div>
<div class="a" style="top:465px;font-size:12.5px;line-height:12.5px;color:#262626;font-style:italic;left:55px;width:400px;text-align:right;">2</div>
<div class="a" style="top:465px;font-size:12.5px;line-height:12.5px;color:#262626;font-style:italic;left:251.39999999999998px;width:400px;text-align:right;">3</div>
<div class="a" style="top:465px;font-size:12.7px;line-height:12.7px;color:#262626;left:661.6px;">Frozen</div>
<div class="a" style="top:465px;font-size:12.7px;line-height:12.7px;color:#262626;font-style:italic;left:646px;width:400px;text-align:right;">1762</div>
<div class="a" style="left:227px;top:509px;width:823px;height:1px;background:#d9d9d9;"></div>
<div class="a" style="top:491px;font-size:14.5px;line-height:14.5px;color:#383838;-webkit-text-stroke:0.1px currentColor;left:95.30000000000001px;width:300px;text-align:center;">11</div>
<div class="a" style="top:491px;font-size:12.5px;line-height:12.5px;color:#262626;font-style:italic;left:55px;width:400px;text-align:right;">2</div>
<div class="a" style="top:491px;font-size:12.5px;line-height:12.5px;color:#262626;font-style:italic;left:251.39999999999998px;width:400px;text-align:right;">3</div>
<div class="a" style="top:490px;font-size:13.25px;line-height:13.25px;color:#262626;left:661.6px;">Detergents_Paper</div>
<div class="a" style="top:491px;font-size:12.7px;line-height:12.7px;color:#262626;font-style:italic;left:646px;width:400px;text-align:right;">3293</div>
<div class="a" style="left:227px;top:535px;width:823px;height:1px;background:#d9d9d9;"></div>
<div class="a" style="top:516px;font-size:14.5px;line-height:14.5px;color:#383838;-webkit-text-stroke:0.1px currentColor;left:95.30000000000001px;width:300px;text-align:center;">12</div>
<div class="a" style="top:517px;font-size:12.5px;line-height:12.5px;color:#262626;font-style:italic;left:55px;width:400px;text-align:right;">2</div>
<div class="a" style="top:517px;font-size:12.5px;line-height:12.5px;color:#262626;font-style:italic;left:251.39999999999998px;width:400px;text-align:right;">3</div>
<div class="a" style="top:517px;font-size:12.7px;line-height:12.7px;color:#262626;left:661.6px;">Delicassen</div>
<div class="a" style="top:517px;font-size:12.7px;line-height:12.7px;color:#262626;font-style:italic;left:646px;width:400px;text-align:right;">1776</div>
<div class="a" style="left:227px;top:561px;width:823px;height:1px;background:#d9d9d9;"></div>
<div class="a" style="top:542px;font-size:14.5px;line-height:14.5px;color:#383838;-webkit-text-stroke:0.1px currentColor;left:95.30000000000001px;width:300px;text-align:center;">13</div>
<div class="a" style="top:543px;font-size:12.5px;line-height:12.5px;color:#262626;font-style:italic;left:55px;width:400px;text-align:right;">2</div>
<div class="a" style="top:543px;font-size:12.5px;line-height:12.5px;color:#262626;font-style:italic;left:251.39999999999998px;width:400px;text-align:right;">3</div>
<div class="a" style="top:543px;font-size:12.7px;line-height:12.7px;color:#262626;left:661.6px;">Fresh</div>
<div class="a" style="top:543px;font-size:12.7px;line-height:12.7px;color:#262626;font-style:italic;left:646px;width:400px;text-align:right;">6353</div>
<div class="a" style="left:227px;top:587px;width:823px;height:1px;background:#d9d9d9;"></div>
<div class="a" style="top:568px;font-size:14.5px;line-height:14.5px;color:#383838;-webkit-text-stroke:0.1px currentColor;left:95.30000000000001px;width:300px;text-align:center;">14</div>
<div class="a" style="top:568px;font-size:12.5px;line-height:12.5px;color:#262626;font-style:italic;left:55px;width:400px;text-align:right;">2</div>
<div class="a" style="top:568px;font-size:12.5px;line-height:12.5px;color:#262626;font-style:italic;left:251.39999999999998px;width:400px;text-align:right;">3</div>
<div class="a" style="top:568px;font-size:12.7px;line-height:12.7px;color:#262626;left:661.6px;">Milk</div>
<div class="a" style="top:568px;font-size:12.7px;line-height:12.7px;color:#262626;font-style:italic;left:646px;width:400px;text-align:right;">8808</div>
<div class="a" style="left:227px;top:613px;width:823px;height:1px;background:#d9d9d9;"></div>
<div class="a" style="top:594px;font-size:14.5px;line-height:14.5px;color:#383838;-webkit-text-stroke:0.1px currentColor;left:95.30000000000001px;width:300px;text-align:center;">15</div>
<div class="a" style="top:594px;font-size:12.5px;line-height:12.5px;color:#262626;font-style:italic;left:55px;width:400px;text-align:right;">2</div>
<div class="a" style="top:594px;font-size:12.5px;line-height:12.5px;color:#262626;font-style:italic;left:251.39999999999998px;width:400px;text-align:right;">3</div>
<div class="a" style="top:594px;font-size:12.7px;line-height:12.7px;color:#262626;left:661.6px;">Grocery</div>
<div class="a" style="top:594px;font-size:12.7px;line-height:12.7px;color:#262626;font-style:italic;left:646px;width:400px;text-align:right;">7684</div>
<div class="a" style="left:227px;top:638px;width:823px;height:1px;background:#d9d9d9;"></div>
<div class="a" style="top:620px;font-size:14.5px;line-height:14.5px;color:#383838;-webkit-text-stroke:0.1px currentColor;left:95.30000000000001px;width:300px;text-align:center;">16</div>
<div class="a" style="top:620px;font-size:12.5px;line-height:12.5px;color:#262626;font-style:italic;left:55px;width:400px;text-align:right;">2</div>
<div class="a" style="top:620px;font-size:12.5px;line-height:12.5px;color:#262626;font-style:italic;left:251.39999999999998px;width:400px;text-align:right;">3</div>
<div class="a" style="top:620px;font-size:12.7px;line-height:12.7px;color:#262626;left:661.6px;">Frozen</div>
<div class="a" style="top:620px;font-size:12.7px;line-height:12.7px;color:#262626;font-style:italic;left:646px;width:400px;text-align:right;">2405</div>
<div class="a" style="left:227px;top:664px;width:823px;height:1px;background:#d9d9d9;"></div>
<div class="a" style="top:646px;font-size:14.5px;line-height:14.5px;color:#383838;-webkit-text-stroke:0.1px currentColor;left:95.30000000000001px;width:300px;text-align:center;">17</div>
<div class="a" style="top:646px;font-size:12.5px;line-height:12.5px;color:#262626;font-style:italic;left:55px;width:400px;text-align:right;">2</div>
<div class="a" style="top:646px;font-size:12.5px;line-height:12.5px;color:#262626;font-style:italic;left:251.39999999999998px;width:400px;text-align:right;">3</div>
<div class="a" style="top:645px;font-size:13.25px;line-height:13.25px;color:#262626;left:661.6px;">Detergents_Paper</div>
<div class="a" style="top:646px;font-size:12.7px;line-height:12.7px;color:#262626;font-style:italic;left:646px;width:400px;text-align:right;">3516</div>
<div class="a" style="left:227px;top:690px;width:823px;height:1px;background:#d9d9d9;"></div>
<div class="a" style="top:672px;font-size:14.5px;line-height:14.5px;color:#383838;-webkit-text-stroke:0.1px currentColor;left:95.30000000000001px;width:300px;text-align:center;">18</div>
<div class="a" style="top:672px;font-size:12.5px;line-height:12.5px;color:#262626;font-style:italic;left:55px;width:400px;text-align:right;">2</div>
<div class="a" style="top:672px;font-size:12.5px;line-height:12.5px;color:#262626;font-style:italic;left:251.39999999999998px;width:400px;text-align:right;">3</div>
<div class="a" style="top:672px;font-size:12.7px;line-height:12.7px;color:#262626;left:661.6px;">Delicassen</div>
<div class="a" style="top:672px;font-size:12.7px;line-height:12.7px;color:#262626;font-style:italic;left:646px;width:400px;text-align:right;">7844</div>
<div class="a" style="left:227px;top:716px;width:823px;height:1px;background:#d9d9d9;"></div>
<div class="a" style="top:697px;font-size:14.5px;line-height:14.5px;color:#383838;-webkit-text-stroke:0.1px currentColor;left:95.30000000000001px;width:300px;text-align:center;">19</div>
<div class="a" style="top:698px;font-size:12.5px;line-height:12.5px;color:#262626;font-style:italic;left:55px;width:400px;text-align:right;">1</div>
<div class="a" style="top:698px;font-size:12.5px;line-height:12.5px;color:#262626;font-style:italic;left:251.39999999999998px;width:400px;text-align:right;">3</div>
<div class="a" style="top:698px;font-size:12.7px;line-height:12.7px;color:#262626;left:661.6px;">Fresh</div>
<div class="a" style="top:698px;font-size:12.7px;line-height:12.7px;color:#262626;font-style:italic;left:646px;width:400px;text-align:right;">13265</div>
<div class="a" style="left:227px;top:742px;width:823px;height:1px;background:#d9d9d9;"></div>
<div class="a" style="top:723px;font-size:14.5px;line-height:14.5px;color:#383838;-webkit-text-stroke:0.1px currentColor;left:95.30000000000001px;width:300px;text-align:center;">20</div>
<div class="a" style="top:724px;font-size:12.5px;line-height:12.5px;color:#262626;font-style:italic;left:55px;width:400px;text-align:right;">1</div>
<div class="a" style="top:724px;font-size:12.5px;line-height:12.5px;color:#262626;font-style:italic;left:251.39999999999998px;width:400px;text-align:right;">3</div>
<div class="a" style="top:724px;font-size:12.7px;line-height:12.7px;color:#262626;left:661.6px;">Milk</div>
<div class="a" style="top:724px;font-size:12.7px;line-height:12.7px;color:#262626;font-style:italic;left:646px;width:400px;text-align:right;">1196</div>
<div class="a" style="left:227px;top:768px;width:823px;height:1px;background:#d9d9d9;"></div>
<div class="a" style="top:749px;font-size:14.5px;line-height:14.5px;color:#383838;-webkit-text-stroke:0.1px currentColor;left:95.30000000000001px;width:300px;text-align:center;">21</div>
<div class="a" style="top:750px;font-size:12.5px;line-height:12.5px;color:#262626;font-style:italic;left:55px;width:400px;text-align:right;">1</div>
<div class="a" style="top:750px;font-size:12.5px;line-height:12.5px;color:#262626;font-style:italic;left:251.39999999999998px;width:400px;text-align:right;">3</div>
<div class="a" style="top:750px;font-size:12.7px;line-height:12.7px;color:#262626;left:661.6px;">Grocery</div>
<div class="a" style="top:750px;font-size:12.7px;line-height:12.7px;color:#262626;font-style:italic;left:646px;width:400px;text-align:right;">4221</div>
<div class="a" style="left:227px;top:794px;width:823px;height:1px;background:#d9d9d9;"></div>
<div class="a" style="top:775px;font-size:14.5px;line-height:14.5px;color:#383838;-webkit-text-stroke:0.1px currentColor;left:95.30000000000001px;width:300px;text-align:center;">22</div>
<div class="a" style="top:775px;font-size:12.5px;line-height:12.5px;color:#262626;font-style:italic;left:55px;width:400px;text-align:right;">1</div>
<div class="a" style="top:775px;font-size:12.5px;line-height:12.5px;color:#262626;font-style:italic;left:251.39999999999998px;width:400px;text-align:right;">3</div>
<div class="a" style="top:775px;font-size:12.7px;line-height:12.7px;color:#262626;left:661.6px;">Frozen</div>
<div class="a" style="top:775px;font-size:12.7px;line-height:12.7px;color:#262626;font-style:italic;left:646px;width:400px;text-align:right;">6404</div>
<div class="a" style="left:227px;top:820px;width:823px;height:1px;background:#d9d9d9;"></div>
<div class="a" style="top:801px;font-size:14.5px;line-height:14.5px;color:#383838;-webkit-text-stroke:0.1px currentColor;left:95.30000000000001px;width:300px;text-align:center;">23</div>
<div class="a" style="top:801px;font-size:12.5px;line-height:12.5px;color:#262626;font-style:italic;left:55px;width:400px;text-align:right;">1</div>
<div class="a" style="top:801px;font-size:12.5px;line-height:12.5px;color:#262626;font-style:italic;left:251.39999999999998px;width:400px;text-align:right;">3</div>
<div class="a" style="top:800px;font-size:13.25px;line-height:13.25px;color:#262626;left:661.6px;">Detergents_Paper</div>
<div class="a" style="top:801px;font-size:12.7px;line-height:12.7px;color:#262626;font-style:italic;left:646px;width:400px;text-align:right;">507</div>
<div class="a" style="left:227px;top:845px;width:823px;height:1px;background:#d9d9d9;"></div>
<div class="a" style="top:827px;font-size:14.5px;line-height:14.5px;color:#383838;-webkit-text-stroke:0.1px currentColor;left:95.30000000000001px;width:300px;text-align:center;">24</div>
<div class="a" style="top:827px;font-size:12.5px;line-height:12.5px;color:#262626;font-style:italic;left:55px;width:400px;text-align:right;">1</div>
<div class="a" style="top:827px;font-size:12.5px;line-height:12.5px;color:#262626;font-style:italic;left:251.39999999999998px;width:400px;text-align:right;">3</div>
<div class="a" style="top:827px;font-size:12.7px;line-height:12.7px;color:#262626;left:661.6px;">Delicassen</div>
<div class="a" style="top:827px;font-size:12.7px;line-height:12.7px;color:#262626;font-style:italic;left:646px;width:400px;text-align:right;">1788</div>
<div class="a" style="left:227px;top:871px;width:823px;height:1px;background:#d9d9d9;"></div>
<div class="a" style="top:853px;font-size:14.5px;line-height:14.5px;color:#383838;-webkit-text-stroke:0.1px currentColor;left:95.30000000000001px;width:300px;text-align:center;">25</div>
<div class="a" style="top:853px;font-size:12.5px;line-height:12.5px;color:#262626;font-style:italic;left:55px;width:400px;text-align:right;">2</div>
<div class="a" style="top:853px;font-size:12.5px;line-height:12.5px;color:#262626;font-style:italic;left:251.39999999999998px;width:400px;text-align:right;">3</div>
<div class="a" style="top:853px;font-size:12.7px;line-height:12.7px;color:#262626;left:661.6px;">Fresh</div>
<div class="a" style="top:853px;font-size:12.7px;line-height:12.7px;color:#262626;font-style:italic;left:646px;width:400px;text-align:right;">22615</div>
<div class="a" style="left:227px;top:897px;width:823px;height:1px;background:#d9d9d9;"></div>
<div class="a" style="top:878px;font-size:14.5px;line-height:14.5px;color:#383838;-webkit-text-stroke:0.1px currentColor;left:95.30000000000001px;width:300px;text-align:center;">26</div>
<div class="a" style="top:879px;font-size:12.5px;line-height:12.5px;color:#262626;font-style:italic;left:55px;width:400px;text-align:right;">2</div>
<div class="a" style="top:879px;font-size:12.5px;line-height:12.5px;color:#262626;font-style:italic;left:251.39999999999998px;width:400px;text-align:right;">3</div>
<div class="a" style="top:879px;font-size:12.7px;line-height:12.7px;color:#262626;left:661.6px;">Milk</div>
<div class="a" style="top:879px;font-size:12.7px;line-height:12.7px;color:#262626;font-style:italic;left:646px;width:400px;text-align:right;">5410</div>
<div class="a" style="left:227px;top:923px;width:823px;height:1px;background:#d9d9d9;"></div>
<div class="a" style="top:904px;font-size:14.5px;line-height:14.5px;color:#383838;-webkit-text-stroke:0.1px currentColor;left:95.30000000000001px;width:300px;text-align:center;">27</div>
<div class="a" style="top:905px;font-size:12.5px;line-height:12.5px;color:#262626;font-style:italic;left:55px;width:400px;text-align:right;">2</div>
<div class="a" style="top:905px;font-size:12.5px;line-height:12.5px;color:#262626;font-style:italic;left:251.39999999999998px;width:400px;text-align:right;">3</div>
<div class="a" style="top:905px;font-size:12.7px;line-height:12.7px;color:#262626;left:661.6px;">Grocery</div>
<div class="a" style="top:905px;font-size:12.7px;line-height:12.7px;color:#262626;font-style:italic;left:646px;width:400px;text-align:right;">7198</div>
<div class="a" style="left:227px;top:949px;width:823px;height:1px;background:#d9d9d9;"></div>
<div class="a" style="top:930px;font-size:14.5px;line-height:14.5px;color:#383838;-webkit-text-stroke:0.1px currentColor;left:95.30000000000001px;width:300px;text-align:center;">28</div>
<div class="a" style="top:931px;font-size:12.5px;line-height:12.5px;color:#262626;font-style:italic;left:55px;width:400px;text-align:right;">2</div>
<div class="a" style="top:931px;font-size:12.5px;line-height:12.5px;color:#262626;font-style:italic;left:251.39999999999998px;width:400px;text-align:right;">3</div>
<div class="a" style="top:931px;font-size:12.7px;line-height:12.7px;color:#262626;left:661.6px;">Frozen</div>
<div class="a" style="top:931px;font-size:12.7px;line-height:12.7px;color:#262626;font-style:italic;left:646px;width:400px;text-align:right;">3915</div>
<div class="a" style="left:227px;top:975px;width:823px;height:1px;background:#d9d9d9;"></div>
<div class="a" style="top:956px;font-size:14.5px;line-height:14.5px;color:#383838;-webkit-text-stroke:0.1px currentColor;left:95.30000000000001px;width:300px;text-align:center;">29</div>
<div class="a" style="top:956px;font-size:12.5px;line-height:12.5px;color:#262626;font-style:italic;left:55px;width:400px;text-align:right;">2</div>
<div class="a" style="top:956px;font-size:12.5px;line-height:12.5px;color:#262626;font-style:italic;left:251.39999999999998px;width:400px;text-align:right;">3</div>
<div class="a" style="top:955px;font-size:13.25px;line-height:13.25px;color:#262626;left:661.6px;">Detergents_Paper</div>
<div class="a" style="top:956px;font-size:12.7px;line-height:12.7px;color:#262626;font-style:italic;left:646px;width:400px;text-align:right;">1777</div>
<div class="a" style="top:982px;font-size:14.5px;line-height:14.5px;color:#383838;-webkit-text-stroke:0.1px currentColor;left:95.30000000000001px;width:300px;text-align:center;">30</div>
<div class="a" style="top:982px;font-size:12.5px;line-height:12.5px;color:#262626;font-style:italic;left:55px;width:400px;text-align:right;">2</div>
<div class="a" style="top:982px;font-size:12.5px;line-height:12.5px;color:#262626;font-style:italic;left:251.39999999999998px;width:400px;text-align:right;">3</div>
<div class="a" style="top:982px;font-size:12.7px;line-height:12.7px;color:#262626;left:661.6px;">Delicassen</div>
<div class="a" style="top:982px;font-size:12.7px;line-height:12.7px;color:#262626;font-style:italic;left:646px;width:400px;text-align:right;">5185</div>
<svg style="left:233px;top:199px" width="25" height="17" viewBox="0 0 25 17"><rect x="0.5" y="0.5" width="17" height="15" fill="#fff" stroke="#8a8a8a"/><rect x="0.5" y="0.5" width="17" height="3" fill="#3b6fb6"/><path d="M0.5 7.5 H17.5 M0.5 11.5 H17.5 M6.5 3.5 V15.5 M11.5 3.5 V15.5" stroke="#9a9a9a"/><path d="M19.5 13 H24 L21.75 15.5 Z" fill="#555"/></svg>
<div class="a" style="top:204px;font-size:12.8px;line-height:12.8px;color:#4a4a4a;-webkit-text-stroke:0.45px currentColor;left:266.90000000000003px;">1</div>
<div class="a" style="top:199px;font-size:12.5px;line-height:12.5px;color:#4a4a4a;-webkit-text-stroke:0.45px currentColor;left:272.40000000000003px;">2</div>
<div class="a" style="top:205px;font-size:12.3px;line-height:12.3px;color:#4a4a4a;-webkit-text-stroke:0.45px currentColor;left:278.7px;">3</div>
<div class="a" style="top:202px;font-size:12.67px;line-height:12.67px;color:#303030;font-weight:700;-webkit-text-stroke:0px currentColor;left:293.3px;">Channel</div>
<svg style="left:437px;top:197px" width="20" height="20" viewBox="0 0 20 20"><rect x="0.5" y="0.5" width="19" height="19" fill="#fff" stroke="#8a8a8a"/><path d="M6.2 8.3 H13.3 L9.75 12 Z" fill="#505050"/></svg>
<div class="a" style="top:204px;font-size:12.8px;line-height:12.8px;color:#4a4a4a;-webkit-text-stroke:0.45px currentColor;left:463.70000000000005px;">1</div>
<div class="a" style="top:199px;font-size:12.5px;line-height:12.5px;color:#4a4a4a;-webkit-text-stroke:0.45px currentColor;left:469.20000000000005px;">2</div>
<div class="a" style="top:205px;font-size:12.3px;line-height:12.3px;color:#4a4a4a;-webkit-text-stroke:0.45px currentColor;left:475.5px;">3</div>
<div class="a" style="top:202px;font-size:12.24px;line-height:12.24px;color:#303030;font-weight:700;-webkit-text-stroke:0px currentColor;left:490.1px;">Region</div>
<svg style="left:634px;top:197px" width="20" height="20" viewBox="0 0 20 20"><rect x="0.5" y="0.5" width="19" height="19" fill="#fff" stroke="#8a8a8a"/><path d="M6.2 8.3 H13.3 L9.75 12 Z" fill="#505050"/></svg>
<div class="a" style="top:203px;font-size:10.9px;line-height:10.9px;color:#4a4a4a;-webkit-text-stroke:0.45px currentColor;left:660.7px;">A</div>
<div class="a" style="top:199px;font-size:8.4px;line-height:8.4px;color:#4a4a4a;-webkit-text-stroke:0.45px currentColor;left:668.0px;">B</div>
<div class="a" style="top:206px;font-size:10.3px;line-height:10.3px;color:#4a4a4a;-webkit-text-stroke:0.45px currentColor;left:672.5px;">C</div>
<div class="a" style="top:201px;font-size:13.4px;line-height:13.4px;color:#303030;font-weight:700;-webkit-text-stroke:0px currentColor;left:686.7px;">Attribute</div>
<svg style="left:830px;top:197px" width="20" height="20" viewBox="0 0 20 20"><rect x="0.5" y="0.5" width="19" height="19" fill="#fff" stroke="#8a8a8a"/><path d="M6.2 8.3 H13.3 L9.75 12 Z" fill="#505050"/></svg>
<div class="a" style="top:204px;font-size:12.8px;line-height:12.8px;color:#4a4a4a;-webkit-text-stroke:0.45px currentColor;left:857.4px;">1</div>
<div class="a" style="top:199px;font-size:12.5px;line-height:12.5px;color:#4a4a4a;-webkit-text-stroke:0.45px currentColor;left:862.9px;">2</div>
<div class="a" style="top:205px;font-size:12.3px;line-height:12.3px;color:#4a4a4a;-webkit-text-stroke:0.45px currentColor;left:869.1999999999999px;">3</div>
<div class="a" style="top:202px;font-size:12.93px;line-height:12.93px;color:#303030;font-weight:700;-webkit-text-stroke:0px currentColor;left:883.8px;">Value</div>
<svg style="left:1028px;top:197px" width="20" height="20" viewBox="0 0 20 20"><rect x="0.5" y="0.5" width="19" height="19" fill="#fff" stroke="#8a8a8a"/><path d="M6.2 8.3 H13.3 L9.75 12 Z" fill="#505050"/></svg>
<div class="a" style="left:1182px;top:225px;width:21px;height:771px;background:#f0f0f0;"></div>
<div class="a" style="left:1184px;top:267px;width:18px;height:409px;background:#c8c8c8;"></div>
<svg style="left:1186px;top:247px" width="14" height="10" viewBox="0 0 14 10"><path d="M1 9 L7 2.5 L13 9" fill="none" stroke="#444" stroke-width="2.2"/></svg>
<svg style="left:1186px;top:964px" width="14" height="10" viewBox="0 0 14 10"><path d="M1 1 L7 7.5 L13 1" fill="none" stroke="#444" stroke-width="2.2"/></svg>
<div class="a" style="left:1209px;top:177px;width:1px;height:819px;background:#d0d0d0;"></div>
<div class="a" style="top:201px;font-size:24.6px;line-height:24.6px;color:#3d8660;-webkit-text-stroke:0px currentColor;left:1227.0px;transform:scaleX(0.9242);transform-origin:left center;">Query Settings</div>
<svg style="left:1490px;top:207px" width="14" height="14" viewBox="0 0 14 14"><path d="M0.5 0.5 L13.5 13.5 M13.5 0.5 L0.5 13.5" stroke="#555" stroke-width="1.3"/></svg>
<svg style="left:1222px;top:256px" width="9" height="9" viewBox="0 0 9 9"><path d="M8.5 0 V8.5 H0 Z" fill="#333"/></svg>
<div class="a" style="top:254px;font-size:13.19px;line-height:13.19px;color:#175c36;font-weight:700;-webkit-text-stroke:0.3px currentColor;left:1238.6px;">PROPERTIES</div>
<div class="a" style="top:278px;font-size:14.23px;line-height:14.23px;color:#262626;left:1238.6px;">Name</div>
<div class="a" style="left:1238px;top:296px;width:269px;height:27px;background:#ffffff;border:1px solid #9a9a9a"></div>
<div class="a" style="top:305px;font-size:13.41px;line-height:13.41px;color:#3a3a3a;-webkit-text-stroke:0px currentColor;left:1245.7670500000002px;">wholesale_customers</div>
<div class="a" style="top:336px;font-size:14.5px;line-height:14.5px;color:#2b5fa0;left:1238.6px;">All Properties</div>
<svg style="left:1222px;top:380px" width="9" height="9" viewBox="0 0 9 9"><path d="M8.5 0 V8.5 H0 Z" fill="#333"/></svg>
<div class="a" style="top:378px;font-size:13.31px;line-height:13.31px;color:#175c36;font-weight:700;-webkit-text-stroke:0.3px currentColor;left:1238.6px;">APPLIED STEPS</div>
<div class="a" style="left:1238px;top:401px;width:269px;height:571px;background:#ffffff;border:1px solid #b8b8b8"></div>
<div class="a" style="top:409px;font-size:13.75px;line-height:13.75px;color:#262626;left:1264.4px;">Source</div>
<div class="a" style="top:433px;font-size:14.34px;line-height:14.34px;color:#262626;left:1264.4px;">Changed Type</div>
<div class="a" style="left:1239px;top:451px;width:267px;height:25px;background:#d3eee1;"></div>
<svg style="left:1246px;top:458px" width="12" height="12" viewBox="0 0 12 12"><path d="M0.5 0.5 L11.5 11.5 M11.5 0.5 L0.5 11.5" stroke="#666" stroke-width="1"/></svg>
<div class="a" style="top:457px;font-size:14.74px;line-height:14.74px;color:#262626;left:1264.4px;">Unpivoted Other Columns</div>
<svg style="left:1318px;top:700px" width="17" height="25" viewBox="0 0 17 25"><path d="M1 1 L1 19 L5.5 15 L9 23 L11.5 22 L8.2 14.2 L14 14 Z" fill="#fff" stroke="#333" stroke-width="1"/></svg>
<div class="a" style="left:0px;top:996px;width:1536px;height:28px;background:#217346;"></div>
<div class="a" style="left:0px;top:1023px;width:1536px;height:1px;background:#3a3a3a;"></div>
<div class="a" style="top:1006px;font-size:12.88px;line-height:12.88px;color:#f4f4f4;left:5.9px;">4 COLUMNS, 999+ ROWS</div>
<div class="a" style="top:1005px;font-size:13.71px;line-height:13.71px;color:#f4f4f4;left:179.7px;">Column profiling based on top 1000 rows</div>
<div class="a" style="top:1006px;font-size:12.68px;line-height:12.68px;color:#f4f4f4;left:1306.0px;">PREVIEW DOWNLOADED AT 2:21 PM</div>
</body></html>
